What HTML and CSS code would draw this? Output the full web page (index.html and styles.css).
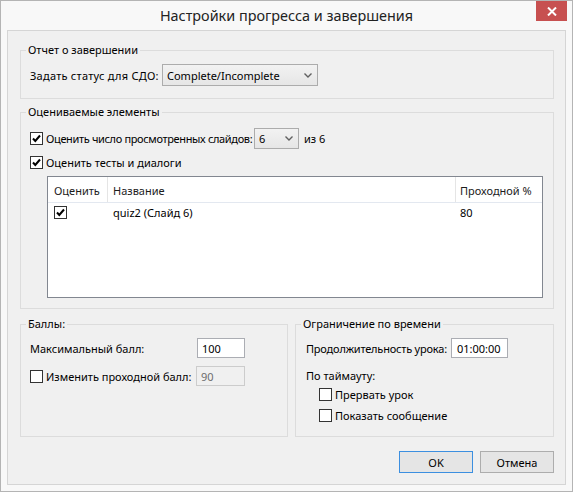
FILE: index.html
```html
<!DOCTYPE html>
<html lang="ru">
<head>
<meta charset="utf-8">
<title>Настройки прогресса и завершения</title>
<link rel="stylesheet" href="styles.css">
</head>
<body>
<div class="window">
  <div class="titlebar">
    <div class="title">Настройки прогресса и завершения</div>
    <div class="close"><svg width="10" height="9" viewBox="0 0 10 9"><path d="M1 0.5 L9 8.5 M9 0.5 L1 8.5" stroke="#fff" stroke-width="2"/></svg></div>
  </div>
  <div class="client">
    <fieldset class="group g1">
      <legend>Отчет о завершении</legend>
      <div class="row">
        <span class="lbl-status">Задать статус для СДО:</span>
        <div class="combo combo-status"><span>Complete/Incomplete</span><svg class="chev" width="8" height="5" viewBox="0 0 8 5"><path d="M0.5 0.5 L4 4 L7.5 0.5" fill="none" stroke="#606060" stroke-width="1.4"/></svg></div>
      </div>
    </fieldset>

    <fieldset class="group g2">
      <legend>Оцениваемые элементы</legend>
      <div class="row row1">
        <label class="check slides"><span class="cb"><svg width="11" height="11" viewBox="0 0 11 11"><path d="M2 5.5 L4.3 8 L9 2.5" fill="none" stroke="#000" stroke-width="2"/></svg></span><span class="slides-text">Оценить число просмотренных слайдов:</span></label>
        <div class="combo combo-num"><span>6</span><svg class="chev" width="8" height="5" viewBox="0 0 8 5"><path d="M0.5 0.5 L4 4 L7.5 0.5" fill="none" stroke="#606060" stroke-width="1.4"/></svg></div>
        <span class="of">из 6</span>
      </div>
      <div class="row row2">
        <label class="check"><span class="cb"><svg width="11" height="11" viewBox="0 0 11 11"><path d="M2 5.5 L4.3 8 L9 2.5" fill="none" stroke="#000" stroke-width="2"/></svg></span><span>Оценить тесты и диалоги</span></label>
      </div>
      <div class="listview">
        <div class="lv-head">
          <div class="c1">Оценить</div>
          <div class="c2">Название</div>
          <div class="c3">Проходной %</div>
        </div>
        <div class="lv-row">
          <div class="c1"><span class="cb"><svg width="11" height="11" viewBox="0 0 11 11"><path d="M2 5.5 L4.3 8 L9 2.5" fill="none" stroke="#000" stroke-width="2"/></svg></span></div>
          <div class="c2">quiz2 (Слайд 6)</div>
          <div class="c3">80</div>
        </div>
      </div>
    </fieldset>

    <div class="bottom">
      <fieldset class="group g3">
        <legend>Баллы:</legend>
        <div class="row rowa">
          <span class="lbl-max">Максимальный балл:</span>
          <div class="input">100</div>
        </div>
        <div class="row rowb">
          <label class="check lbl-pass"><span class="cb"></span><span>Изменить проходной балл:</span></label>
          <div class="input disabled">90</div>
        </div>
      </fieldset>
      <fieldset class="group g4">
        <legend>Ограничение по времени</legend>
        <div class="row rowa">
          <span class="lbl-dur">Продолжительность урока:</span>
          <div class="input time">01:00:00</div>
        </div>
        <div class="row rowt">По таймауту:</div>
        <div class="row rowc1">
          <label class="check"><span class="cb"></span><span>Прервать урок</span></label>
        </div>
        <div class="row rowc2">
          <label class="check"><span class="cb"></span><span>Показать сообщение</span></label>
        </div>
      </fieldset>
    </div>

    <div class="buttons">
      <button class="btn default">OK</button>
      <button class="btn">Отмена</button>
    </div>
  </div>
</div>
</body>
</html>
```

FILE: styles.css
```css
* { box-sizing: border-box; }

body {
  margin: 0;
  background: #ffffff;
  font-family: "Noto Sans", "Open Sans", sans-serif;
  font-size: 11px;
  color: #000;
}

.window {
  width: 573px;
  height: 492px;
  border: 1px solid #b4b4b4;
  background: #f8f8f8;
  display: flex;
  flex-direction: column;
}

.titlebar {
  height: 29px;
  flex: none;
  display: grid;
  grid-template-columns: 1fr auto 1fr;
  padding: 0 5px;
}

.title {
  grid-column: 2;
  font-size: 14.4px;
  line-height: 29px;
  color: #222;
  white-space: nowrap;
}

.close {
  grid-column: 3;
  justify-self: end;
  align-self: start;
  width: 31px;
  height: 20px;
  background: #c75050;
  display: flex;
  align-items: center;
  justify-content: center;
}

.client {
  margin: 0 6px;
  height: 455px;
  flex: none;
  border: 1px solid #d5d5d5;
  background: #f0f0f0;
  padding: 0 11px 0 12px;
}

.group {
  margin: 0;
  padding: 0;
  border: 1px solid #dcdcdc;
  min-width: 0;
}

.group legend {
  margin-left: 5px;
  padding: 0 2px;
  height: 14px;
  line-height: 14px;
  white-space: nowrap;
}

.row {
  display: flex;
  align-items: center;
  white-space: nowrap;
}

/* group 1 */
.g1 { margin-top: 12px; }
.g1 .row { height: 22px; margin: 7px 0 12px 9px; }
.lbl-status { width: 132px; letter-spacing: 0.25px; }

.combo {
  border: 1px solid #acacac;
  background: linear-gradient(#f2f2f2, #e6e6e6);
  display: flex;
  align-items: center;
  justify-content: space-between;
  padding: 0 5px 0 4px;
}
.combo-status { width: 156px; height: 22px; }
.combo-num { width: 45px; height: 21px; }

/* checkboxes */
.check {
  display: flex;
  align-items: center;
  gap: 3px;
}
.cb {
  width: 13px;
  height: 13px;
  flex: none;
  border: 1px solid #333;
  background: #fff;
  display: inline-flex;
}

/* group 2 */
.g2 { margin-top: 6px; }
.g2 .row1 { height: 21px; margin: 9px 0 0 9px; }
.g2 .row2 { height: 21px; margin: 3px 0 0 9px; }
.slides { width: 224px; }
.slides-text { letter-spacing: -0.35px; }
.of { margin-left: 5px; }

.listview {
  margin: 3px 10px 10px 26px;
  height: 122px;
  border: 1px solid #828790;
  background: #fff;
}
.lv-head, .lv-row {
  display: grid;
  grid-template-columns: 60px 348px 1fr;
}
.lv-head {
  height: 26px;
  border-bottom: 1px solid #e3e8f0;
  color: #1c1c1c;
}
.lv-head > div {
  display: flex;
  align-items: center;
  padding-top: 2px;
  border-right: 1px solid #e5e5e5;
}
.lv-head > div:last-child { border-right: 0; }
.lv-row { height: 18px; }
.lv-row > div { display: flex; align-items: center; }
.c1 { padding-left: 6px; }
.c2 { padding-left: 5px; }
.c3 { padding-left: 4px; }

/* bottom groups */
.bottom {
  display: grid;
  grid-template-columns: 268px 1fr;
  gap: 7px;
  margin-top: 8px;
}
.g3 .row { margin-left: 9px; }
.g4 .row { margin-left: 10px; }
.rowa { height: 20px; margin-top: 7px; }
.g3 .rowb { height: 20px; margin-top: 8px; }
.lbl-max { width: 167px; }
.lbl-pass { width: 166px; }
.lbl-dur { width: 145px; letter-spacing: -0.2px; }

.input {
  height: 20px;
  width: 48px;
  border: 1px solid #abadb3;
  background: #fff;
  padding-left: 4px;
  display: flex;
  align-items: center;
}
.input.disabled {
  width: 49px;
  border-color: #cccccc;
  background: #f0f0f0;
  color: #6d6d6d;
}
.input.time { width: 57px; padding-left: 5px; }

.g4 .rowt { height: 19px; margin-top: 8px; }
.g4 .rowc1 { height: 14px; margin-top: 2px; padding-left: 13px; }
.g4 .rowc2 { height: 14px; margin-top: 7px; margin-bottom: 14px; padding-left: 13px; }

/* buttons */
.buttons {
  display: flex;
  justify-content: flex-end;
  gap: 7px;
  margin-top: 14px;
}
.btn {
  width: 74px;
  height: 22px;
  border: 1px solid #adadad;
  background: #e5e5e5;
  font-family: inherit;
  font-size: 11px;
  color: #000;
  padding: 0;
}
.btn.default { border-color: #3c8fe0; }
```
